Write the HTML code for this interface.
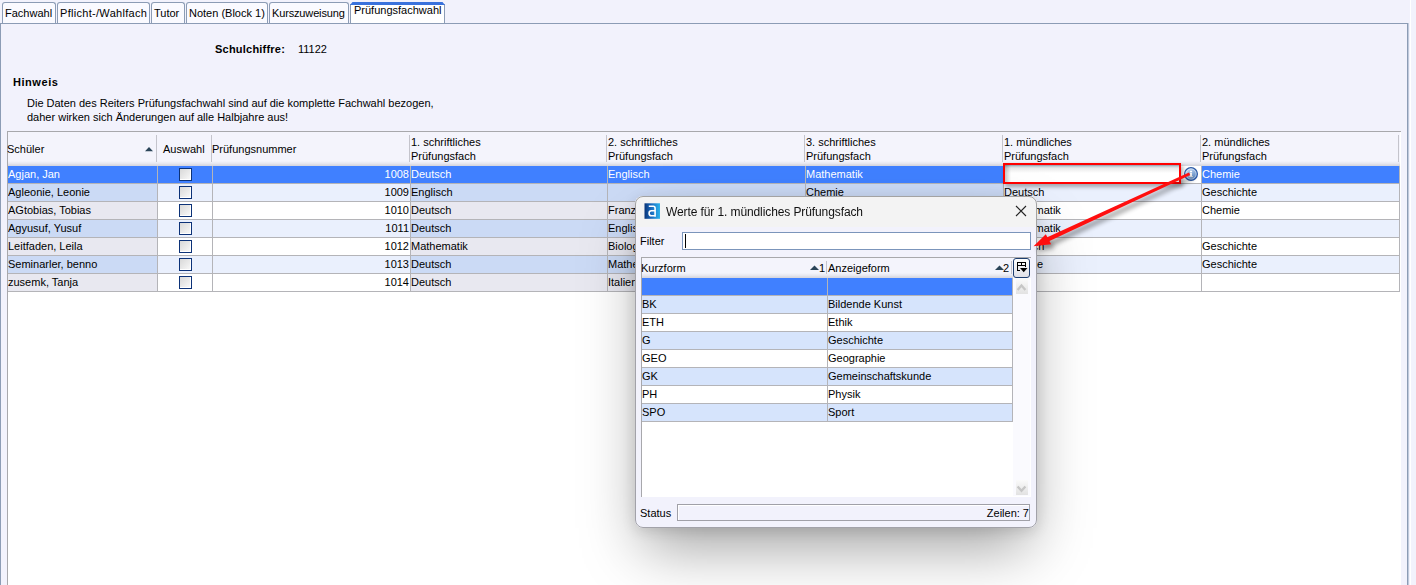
<!DOCTYPE html><html><head><meta charset="utf-8"><style>
*{box-sizing:border-box}
html,body{margin:0;padding:0}
body{width:1416px;height:585px;overflow:hidden;position:relative;background:#f2f2fc;font-family:"Liberation Sans",sans-serif;font-size:11px;color:#000}
.a{position:absolute}
.t{position:absolute;white-space:nowrap;line-height:14px}
.tab{position:absolute;top:2px;height:22px;border:1px solid #8c9cb5;border-bottom:none;border-radius:3px 3px 0 0;background:#fafaff}
.tab span{position:absolute;left:2px;top:3px;line-height:14px;white-space:nowrap}
.cell{position:absolute;height:17px;overflow:hidden;white-space:nowrap;line-height:14px}
.cell span{position:absolute;top:1px;left:0}
.hl{position:absolute;height:1px;background:#b4b4b8}
.vl{position:absolute;width:1px;background:#b4b4b8}
.cb{position:absolute;width:13px;height:13px;border:1px solid #0c3278;box-shadow:inset -1px -1px 0 #fff;background:linear-gradient(135deg,#d8d8d8,#fafafa)}
</style></head><body>

<div class="tab" style="left:2px;width:54px"><span>Fachwahl</span></div>
<div class="tab" style="left:57px;width:93px"><span style=letter-spacing:0.3px>Pflicht-/Wahlfach</span></div>
<div class="tab" style="left:151px;width:34px"><span>Tutor</span></div>
<div class="tab" style="left:186px;width:82px"><span>Noten (Block 1)</span></div>
<div class="tab" style="left:269px;width:80px"><span style=letter-spacing:-0.15px>Kurszuweisung</span></div>
<div class="tab" style="left:350px;width:95px;top:4px;height:20px;background:#ffffff;border-top:none;border-radius:0"><span style="top:-1px;left:3px">Prüfungsfachwahl</span></div>
<div class="a" style="left:350px;top:2px;width:95px;height:3px;background:#3a72dc;clip-path:polygon(2.5px 0,92.5px 0,95px 3px,0 3px)"></div>
<div class="a" style="left:0;top:23px;width:1408px;height:600px;border:1px solid #8c9cb5;border-bottom:none;background:#f2f2fc;box-shadow:1px 0 0 #c0cadc"></div>
<div class="a" style="left:1410px;top:0;width:1px;height:585px;background:#ffffff"></div>
<div class="t" style="left:215px;top:42px;font-weight:bold;letter-spacing:0.22px">Schulchiffre:</div>
<div class="t" style="left:298px;top:42px">11122</div>
<div class="t" style="left:13px;top:75px;font-weight:bold;letter-spacing:0.55px">Hinweis</div>
<div class="t" style="left:27px;top:96px">Die Daten des Reiters Prüfungsfachwahl sind auf die komplette Fachwahl bezogen,<br>daher wirken sich Änderungen auf alle Halbjahre aus!</div>
<div class="a" style="left:7px;top:131px;width:1394px;height:460px;background:#ffffff;border-top:1px solid #a8a8ac;border-left:1px solid #a8a8ac"></div>
<div class="a" style="left:8px;top:132px;width:1392px;height:34px;background:linear-gradient(#f4f4fc 0px,#f4f4fc 29px,#e4e4ec 32px,#d8d8e0 33px)"></div>
<div class="t" style="left:7px;top:142px">Schüler</div>
<div class="vl" style="left:156px;top:135px;height:27px;background:#c4c4cc"></div>
<div class="t" style="left:163px;top:142px">Auswahl</div>
<div class="vl" style="left:211px;top:135px;height:27px;background:#c4c4cc"></div>
<div class="t" style="left:212px;top:142px">Prüfungsnummer</div>
<div class="vl" style="left:409px;top:135px;height:27px;background:#c4c4cc"></div>
<div class="t" style="left:411px;top:135px">1. schriftliches<br>Prüfungsfach</div>
<div class="vl" style="left:606px;top:135px;height:27px;background:#c4c4cc"></div>
<div class="t" style="left:608px;top:135px">2. schriftliches<br>Prüfungsfach</div>
<div class="vl" style="left:804px;top:135px;height:27px;background:#c4c4cc"></div>
<div class="t" style="left:806px;top:135px">3. schriftliches<br>Prüfungsfach</div>
<div class="vl" style="left:1002px;top:135px;height:27px;background:#c4c4cc"></div>
<div class="t" style="left:1004px;top:135px">1. mündliches<br>Prüfungsfach</div>
<div class="vl" style="left:1200px;top:135px;height:27px;background:#c4c4cc"></div>
<div class="t" style="left:1202px;top:135px">2. mündliches<br>Prüfungsfach</div>
<div class="vl" style="left:1398px;top:135px;height:27px;background:#c4c4cc"></div>
<svg class="a" style="left:145px;top:146px" width="10" height="6"><path d="M0 5.2 L4 1 L8 5.2 Z" fill="#2a4458"/></svg>
<div class="cell" style="left:8px;top:166px;width:149px;background:#4080ff;color:#ffffff"><span>Agjan, Jan</span></div>
<div class="vl" style="left:157px;top:166px;height:18px"></div>
<div class="cell" style="left:158px;top:166px;width:54px;background:#4080ff;color:#ffffff"></div>
<div class="vl" style="left:212px;top:166px;height:18px"></div>
<div class="cell" style="left:213px;top:166px;width:197px;background:#4080ff;color:#ffffff"><span style="left:auto;right:1px">1008</span></div>
<div class="vl" style="left:410px;top:166px;height:18px"></div>
<div class="cell" style="left:411px;top:166px;width:196px;background:#4080ff;color:#ffffff"><span>Deutsch</span></div>
<div class="vl" style="left:607px;top:166px;height:18px"></div>
<div class="cell" style="left:608px;top:166px;width:197px;background:#4080ff;color:#ffffff"><span>Englisch</span></div>
<div class="vl" style="left:805px;top:166px;height:18px"></div>
<div class="cell" style="left:806px;top:166px;width:197px;background:#4080ff;color:#ffffff"><span>Mathematik</span></div>
<div class="vl" style="left:1003px;top:166px;height:18px"></div>
<div class="cell" style="left:1004px;top:166px;width:197px;background:#4080ff;color:#ffffff"></div>
<div class="vl" style="left:1201px;top:166px;height:18px"></div>
<div class="cell" style="left:1202px;top:166px;width:197px;background:#4080ff;color:#ffffff"><span>Chemie</span></div>
<div class="vl" style="left:1399px;top:166px;height:18px"></div>
<div class="hl" style="left:8px;top:183px;width:1392px"></div>
<div class="cb" style="left:179px;top:168px"></div>
<div class="cell" style="left:8px;top:184px;width:149px;background:#cbdaf5;color:#000"><span>Agleonie, Leonie</span></div>
<div class="vl" style="left:157px;top:184px;height:18px"></div>
<div class="cell" style="left:158px;top:184px;width:54px;background:#eaf0fd;color:#000"></div>
<div class="vl" style="left:212px;top:184px;height:18px"></div>
<div class="cell" style="left:213px;top:184px;width:197px;background:#eaf0fd;color:#000"><span style="left:auto;right:1px">1009</span></div>
<div class="vl" style="left:410px;top:184px;height:18px"></div>
<div class="cell" style="left:411px;top:184px;width:196px;background:#cbdaf5;color:#000"><span>Englisch</span></div>
<div class="vl" style="left:607px;top:184px;height:18px"></div>
<div class="cell" style="left:608px;top:184px;width:197px;background:#cbdaf5;color:#000"></div>
<div class="vl" style="left:805px;top:184px;height:18px"></div>
<div class="cell" style="left:806px;top:184px;width:197px;background:#cbdaf5;color:#000"><span>Chemie</span></div>
<div class="vl" style="left:1003px;top:184px;height:18px"></div>
<div class="cell" style="left:1004px;top:184px;width:197px;background:#eaf0fd;color:#000"><span>Deutsch</span></div>
<div class="vl" style="left:1201px;top:184px;height:18px"></div>
<div class="cell" style="left:1202px;top:184px;width:197px;background:#eaf0fd;color:#000"><span>Geschichte</span></div>
<div class="vl" style="left:1399px;top:184px;height:18px"></div>
<div class="hl" style="left:8px;top:201px;width:1392px"></div>
<div class="cb" style="left:179px;top:186px"></div>
<div class="cell" style="left:8px;top:202px;width:149px;background:#e8e8f0;color:#000"><span>AGtobias, Tobias</span></div>
<div class="vl" style="left:157px;top:202px;height:18px"></div>
<div class="cell" style="left:158px;top:202px;width:54px;background:#ffffff;color:#000"></div>
<div class="vl" style="left:212px;top:202px;height:18px"></div>
<div class="cell" style="left:213px;top:202px;width:197px;background:#ffffff;color:#000"><span style="left:auto;right:1px">1010</span></div>
<div class="vl" style="left:410px;top:202px;height:18px"></div>
<div class="cell" style="left:411px;top:202px;width:196px;background:#e8e8f0;color:#000"><span>Deutsch</span></div>
<div class="vl" style="left:607px;top:202px;height:18px"></div>
<div class="cell" style="left:608px;top:202px;width:197px;background:#e8e8f0;color:#000"><span>Französisch</span></div>
<div class="vl" style="left:805px;top:202px;height:18px"></div>
<div class="cell" style="left:806px;top:202px;width:197px;background:#e8e8f0;color:#000"><span>Biologie</span></div>
<div class="vl" style="left:1003px;top:202px;height:18px"></div>
<div class="cell" style="left:1004px;top:202px;width:197px;background:#ffffff;color:#000"><span>Mathematik</span></div>
<div class="vl" style="left:1201px;top:202px;height:18px"></div>
<div class="cell" style="left:1202px;top:202px;width:197px;background:#ffffff;color:#000"><span>Chemie</span></div>
<div class="vl" style="left:1399px;top:202px;height:18px"></div>
<div class="hl" style="left:8px;top:219px;width:1392px"></div>
<div class="cb" style="left:179px;top:204px"></div>
<div class="cell" style="left:8px;top:220px;width:149px;background:#cbdaf5;color:#000"><span>Agyusuf, Yusuf</span></div>
<div class="vl" style="left:157px;top:220px;height:18px"></div>
<div class="cell" style="left:158px;top:220px;width:54px;background:#eaf0fd;color:#000"></div>
<div class="vl" style="left:212px;top:220px;height:18px"></div>
<div class="cell" style="left:213px;top:220px;width:197px;background:#eaf0fd;color:#000"><span style="left:auto;right:1px">1011</span></div>
<div class="vl" style="left:410px;top:220px;height:18px"></div>
<div class="cell" style="left:411px;top:220px;width:196px;background:#cbdaf5;color:#000"><span>Deutsch</span></div>
<div class="vl" style="left:607px;top:220px;height:18px"></div>
<div class="cell" style="left:608px;top:220px;width:197px;background:#cbdaf5;color:#000"><span>Englisch</span></div>
<div class="vl" style="left:805px;top:220px;height:18px"></div>
<div class="cell" style="left:806px;top:220px;width:197px;background:#cbdaf5;color:#000"><span>Physik</span></div>
<div class="vl" style="left:1003px;top:220px;height:18px"></div>
<div class="cell" style="left:1004px;top:220px;width:197px;background:#eaf0fd;color:#000"><span>Mathematik</span></div>
<div class="vl" style="left:1201px;top:220px;height:18px"></div>
<div class="cell" style="left:1202px;top:220px;width:197px;background:#eaf0fd;color:#000"></div>
<div class="vl" style="left:1399px;top:220px;height:18px"></div>
<div class="hl" style="left:8px;top:237px;width:1392px"></div>
<div class="cb" style="left:179px;top:222px"></div>
<div class="cell" style="left:8px;top:238px;width:149px;background:#e8e8f0;color:#000"><span>Leitfaden, Leila</span></div>
<div class="vl" style="left:157px;top:238px;height:18px"></div>
<div class="cell" style="left:158px;top:238px;width:54px;background:#ffffff;color:#000"></div>
<div class="vl" style="left:212px;top:238px;height:18px"></div>
<div class="cell" style="left:213px;top:238px;width:197px;background:#ffffff;color:#000"><span style="left:auto;right:1px">1012</span></div>
<div class="vl" style="left:410px;top:238px;height:18px"></div>
<div class="cell" style="left:411px;top:238px;width:196px;background:#e8e8f0;color:#000"><span>Mathematik</span></div>
<div class="vl" style="left:607px;top:238px;height:18px"></div>
<div class="cell" style="left:608px;top:238px;width:197px;background:#e8e8f0;color:#000"><span>Biologie</span></div>
<div class="vl" style="left:805px;top:238px;height:18px"></div>
<div class="cell" style="left:806px;top:238px;width:197px;background:#e8e8f0;color:#000"><span>Chemie</span></div>
<div class="vl" style="left:1003px;top:238px;height:18px"></div>
<div class="cell" style="left:1004px;top:238px;width:197px;background:#ffffff;color:#000"><span>Deutsch</span></div>
<div class="vl" style="left:1201px;top:238px;height:18px"></div>
<div class="cell" style="left:1202px;top:238px;width:197px;background:#ffffff;color:#000"><span>Geschichte</span></div>
<div class="vl" style="left:1399px;top:238px;height:18px"></div>
<div class="hl" style="left:8px;top:255px;width:1392px"></div>
<div class="cb" style="left:179px;top:240px"></div>
<div class="cell" style="left:8px;top:256px;width:149px;background:#cbdaf5;color:#000"><span>Seminarler, benno</span></div>
<div class="vl" style="left:157px;top:256px;height:18px"></div>
<div class="cell" style="left:158px;top:256px;width:54px;background:#eaf0fd;color:#000"></div>
<div class="vl" style="left:212px;top:256px;height:18px"></div>
<div class="cell" style="left:213px;top:256px;width:197px;background:#eaf0fd;color:#000"><span style="left:auto;right:1px">1013</span></div>
<div class="vl" style="left:410px;top:256px;height:18px"></div>
<div class="cell" style="left:411px;top:256px;width:196px;background:#cbdaf5;color:#000"><span>Deutsch</span></div>
<div class="vl" style="left:607px;top:256px;height:18px"></div>
<div class="cell" style="left:608px;top:256px;width:197px;background:#cbdaf5;color:#000"><span>Mathematik</span></div>
<div class="vl" style="left:805px;top:256px;height:18px"></div>
<div class="cell" style="left:806px;top:256px;width:197px;background:#cbdaf5;color:#000"><span>Physik</span></div>
<div class="vl" style="left:1003px;top:256px;height:18px"></div>
<div class="cell" style="left:1004px;top:256px;width:197px;background:#eaf0fd;color:#000"><span>Biologie</span></div>
<div class="vl" style="left:1201px;top:256px;height:18px"></div>
<div class="cell" style="left:1202px;top:256px;width:197px;background:#eaf0fd;color:#000"><span>Geschichte</span></div>
<div class="vl" style="left:1399px;top:256px;height:18px"></div>
<div class="hl" style="left:8px;top:273px;width:1392px"></div>
<div class="cb" style="left:179px;top:258px"></div>
<div class="cell" style="left:8px;top:274px;width:149px;background:#e8e8f0;color:#000"><span>zusemk, Tanja</span></div>
<div class="vl" style="left:157px;top:274px;height:18px"></div>
<div class="cell" style="left:158px;top:274px;width:54px;background:#ffffff;color:#000"></div>
<div class="vl" style="left:212px;top:274px;height:18px"></div>
<div class="cell" style="left:213px;top:274px;width:197px;background:#ffffff;color:#000"><span style="left:auto;right:1px">1014</span></div>
<div class="vl" style="left:410px;top:274px;height:18px"></div>
<div class="cell" style="left:411px;top:274px;width:196px;background:#e8e8f0;color:#000"><span>Deutsch</span></div>
<div class="vl" style="left:607px;top:274px;height:18px"></div>
<div class="cell" style="left:608px;top:274px;width:197px;background:#e8e8f0;color:#000"><span>Italienisch</span></div>
<div class="vl" style="left:805px;top:274px;height:18px"></div>
<div class="cell" style="left:806px;top:274px;width:197px;background:#e8e8f0;color:#000"><span>Englisch</span></div>
<div class="vl" style="left:1003px;top:274px;height:18px"></div>
<div class="cell" style="left:1004px;top:274px;width:197px;background:#ffffff;color:#000"></div>
<div class="vl" style="left:1201px;top:274px;height:18px"></div>
<div class="cell" style="left:1202px;top:274px;width:197px;background:#ffffff;color:#000"></div>
<div class="vl" style="left:1399px;top:274px;height:18px"></div>
<div class="hl" style="left:8px;top:291px;width:1392px"></div>
<div class="cb" style="left:179px;top:276px"></div>
<div class="a" style="left:1004px;top:166px;width:197px;height:17px;background:#ffffff"></div>
<div class="a" style="left:1005px;top:165px;width:174px;height:17px;background:linear-gradient(#8898a8 0px,#b8c4cc 1px,#e8e8e8 3px,#ffffff 8px)"></div>
<div class="a" style="left:1005px;top:165px;width:6px;height:17px;background:linear-gradient(90deg,rgba(0,0,0,0.22),rgba(0,0,0,0))"></div>
<svg class="a" style="left:1183px;top:166px" width="17" height="17" viewBox="0 0 17 17">
<defs><linearGradient id="ig" x1="0.2" y1="0" x2="0.8" y2="1"><stop offset="0" stop-color="#cfe0f4"/><stop offset="0.55" stop-color="#86aad8"/><stop offset="1" stop-color="#4c7cbc"/></linearGradient></defs>
<circle cx="8" cy="8" r="6.4" fill="url(#ig)" stroke="#2c5aa8" stroke-width="1.2"/>
<circle cx="8" cy="8" r="5.1" fill="none" stroke="rgba(255,255,255,0.5)" stroke-width="0.9"/>
<rect x="7" y="4.8" width="2.1" height="1.5" fill="#fff"/><rect x="7" y="6.9" width="2" height="4" fill="#f4f4f4"/><rect x="6.2" y="10.1" width="3.6" height="1" fill="#e4e4e4"/></svg>
<div class="a" style="left:1003px;top:163px;width:178px;height:21px;border:2px solid #ff0000;box-shadow:2px 3px 4px rgba(0,0,0,0.30),inset 1px 1px 3px rgba(0,0,0,0.0)"></div>
<div class="a" style="left:635px;top:196px;width:402px;height:332px;border-radius:8px;box-shadow:0 28px 56px -8px rgba(0,0,0,0.36),0 3px 14px rgba(0,0,0,0.12)"></div>
<div class="a" style="left:635px;top:196px;width:402px;height:332px;border-radius:8px;background:#f2f2fc;overflow:hidden"><div class="a" style="left:0;top:0;width:402px;height:31px;background:#f3f3f3"></div></div>
<svg class="a" style="left:644px;top:203px" width="16" height="16" viewBox="0 0 16 16">
<defs><linearGradient id="ag" x1="0" y1="0" x2="1" y2="0"><stop offset="0" stop-color="#0a3478"/><stop offset="0.45" stop-color="#1a6cc0"/><stop offset="1" stop-color="#2cb4ec"/></linearGradient></defs>
<rect x="0.5" y="0.3" width="15.5" height="15.5" fill="url(#ag)"/>
<path d="M4.8 3.3 H9.2 Q11.1 3.3 11.1 5.3 V13.7 M11.1 7.7 H7.4 Q5.1 7.7 5.1 10.2 Q5.1 12.8 7.4 12.8 H11.1" fill="none" stroke="#fff" stroke-width="1.6"/></svg>
<div class="t" style="left:666px;top:205px;font-size:12px;color:#111;letter-spacing:-0.1px;will-change:transform">Werte für 1. mündliches Prüfungsfach</div>
<svg class="a" style="left:1015px;top:205px" width="12" height="12" viewBox="0 0 12 12"><path d="M1 1 L11 11 M11 1 L1 11" stroke="#222" stroke-width="1.1"/></svg>
<div class="t" style="left:640px;top:234px">Filter</div>
<div class="a" style="left:682px;top:232px;width:349px;height:18px;border:1px solid #7b95bb;background:#fff"></div>
<div class="a" style="left:685px;top:234px;width:1px;height:14px;background:#000"></div>
<div class="a" style="left:641px;top:257px;width:390px;height:240px;background:#fff;border-top:1px solid #a8a8ac;border-left:1px solid #a8a8ac"></div>
<div class="a" style="left:642px;top:258px;width:371px;height:20px;background:linear-gradient(#f4f4fc 0px,#f4f4fc 15px,#e4e4ec 18px,#d8d8e0 19px)"></div>
<div class="a" style="left:1013px;top:258px;width:18px;height:20px;background:#f4f4fc"></div>
<div class="t" style="left:641px;top:261px">Kurzform</div>
<div class="t" style="left:828px;top:261px">Anzeigeform</div>
<div class="vl" style="left:826px;top:261px;height:13px;background:#c4c4cc"></div>
<div class="vl" style="left:1011px;top:261px;height:13px;background:#c4c4cc"></div>
<svg class="a" style="left:810px;top:265px" width="10" height="6"><path d="M0 5 L4.5 0.5 L9 5 Z" fill="#2a4458"/></svg>
<div class="t" style="left:819px;top:261px">1</div>
<svg class="a" style="left:995px;top:265px" width="10" height="6"><path d="M0 5 L4.5 0.5 L9 5 Z" fill="#2a4458"/></svg>
<div class="t" style="left:1003px;top:261px">2</div>
<div class="a" style="left:1013px;top:258px;width:17px;height:20px;border:1px solid #1e3e70;border-radius:3px;background:linear-gradient(#ffffff,#e0e0e8)"></div>
<svg class="a" style="left:1011px;top:256px" width="20" height="20" shape-rendering="crispEdges"><rect x="6" y="6" width="9" height="1" fill="#000"/><rect x="6" y="9" width="9" height="1" fill="#000"/><rect x="6" y="6" width="1" height="9" fill="#000"/><rect x="6" y="14" width="3" height="1" fill="#000"/><rect x="10" y="6" width="1" height="4" fill="#000"/><rect x="14" y="6" width="1" height="5" fill="#000"/><path d="M9 12 H16.5 L12.7 16.2 Z" fill="#000" shape-rendering="auto"/></svg>
<div class="cell" style="left:642px;top:278px;width:185px;background:#4080ff"><span style="left:0"></span></div>
<div class="vl" style="left:827px;top:278px;height:18px"></div>
<div class="cell" style="left:828px;top:278px;width:184px;background:#4080ff"><span style="left:0"></span></div>
<div class="vl" style="left:1012px;top:278px;height:18px"></div>
<div class="hl" style="left:642px;top:295px;width:371px"></div>
<div class="cell" style="left:642px;top:296px;width:185px;background:#d6e4fc"><span style="left:0">BK</span></div>
<div class="vl" style="left:827px;top:296px;height:18px"></div>
<div class="cell" style="left:828px;top:296px;width:184px;background:#d6e4fc"><span style="left:0">Bildende Kunst</span></div>
<div class="vl" style="left:1012px;top:296px;height:18px"></div>
<div class="hl" style="left:642px;top:313px;width:371px"></div>
<div class="cell" style="left:642px;top:314px;width:185px;background:#ffffff"><span style="left:0">ETH</span></div>
<div class="vl" style="left:827px;top:314px;height:18px"></div>
<div class="cell" style="left:828px;top:314px;width:184px;background:#ffffff"><span style="left:0">Ethik</span></div>
<div class="vl" style="left:1012px;top:314px;height:18px"></div>
<div class="hl" style="left:642px;top:331px;width:371px"></div>
<div class="cell" style="left:642px;top:332px;width:185px;background:#d6e4fc"><span style="left:0">G</span></div>
<div class="vl" style="left:827px;top:332px;height:18px"></div>
<div class="cell" style="left:828px;top:332px;width:184px;background:#d6e4fc"><span style="left:0">Geschichte</span></div>
<div class="vl" style="left:1012px;top:332px;height:18px"></div>
<div class="hl" style="left:642px;top:349px;width:371px"></div>
<div class="cell" style="left:642px;top:350px;width:185px;background:#ffffff"><span style="left:0">GEO</span></div>
<div class="vl" style="left:827px;top:350px;height:18px"></div>
<div class="cell" style="left:828px;top:350px;width:184px;background:#ffffff"><span style="left:0">Geographie</span></div>
<div class="vl" style="left:1012px;top:350px;height:18px"></div>
<div class="hl" style="left:642px;top:367px;width:371px"></div>
<div class="cell" style="left:642px;top:368px;width:185px;background:#d6e4fc"><span style="left:0">GK</span></div>
<div class="vl" style="left:827px;top:368px;height:18px"></div>
<div class="cell" style="left:828px;top:368px;width:184px;background:#d6e4fc"><span style="left:0">Gemeinschaftskunde</span></div>
<div class="vl" style="left:1012px;top:368px;height:18px"></div>
<div class="hl" style="left:642px;top:385px;width:371px"></div>
<div class="cell" style="left:642px;top:386px;width:185px;background:#ffffff"><span style="left:0">PH</span></div>
<div class="vl" style="left:827px;top:386px;height:18px"></div>
<div class="cell" style="left:828px;top:386px;width:184px;background:#ffffff"><span style="left:0">Physik</span></div>
<div class="vl" style="left:1012px;top:386px;height:18px"></div>
<div class="hl" style="left:642px;top:403px;width:371px"></div>
<div class="cell" style="left:642px;top:404px;width:185px;background:#d6e4fc"><span style="left:0">SPO</span></div>
<div class="vl" style="left:827px;top:404px;height:18px"></div>
<div class="cell" style="left:828px;top:404px;width:184px;background:#d6e4fc"><span style="left:0">Sport</span></div>
<div class="vl" style="left:1012px;top:404px;height:18px"></div>
<div class="hl" style="left:642px;top:421px;width:371px"></div>
<div class="a" style="left:1013px;top:278px;width:17px;height:218px;background:#fafafe"></div>
<div class="a" style="left:1016px;top:279px;width:12px;height:15px;background:linear-gradient(#fafafa,#e2e2e2)"></div>
<svg class="a" style="left:1016px;top:279px" width="12" height="15"><path d="M1.6 11 L5.5 6.6 L9.4 11" fill="none" stroke="#c6c6c6" stroke-width="2.3"/></svg>
<div class="a" style="left:1016px;top:480px;width:12px;height:15px;background:linear-gradient(#fafafa,#e2e2e2)"></div>
<svg class="a" style="left:1016px;top:480px" width="12" height="15"><path d="M1.6 6.4 L5.5 10.8 L9.4 6.4" fill="none" stroke="#c6c6c6" stroke-width="2.3"/></svg>
<div class="t" style="left:640px;top:506px">Status</div>
<div class="a" style="left:677px;top:504px;width:353px;height:17px;border:1px solid #a0a0a8;background:#f2f2fc;box-shadow:inset 1px 1px 0 #fff"></div>
<div class="t" style="left:auto;right:387px;top:506px">Zeilen: 7</div>
<div class="a" style="left:635px;top:196px;width:402px;height:332px;border:1px solid rgba(0,0,0,0.33);border-radius:8px"></div>
<svg class="a" style="left:0;top:0" width="1416" height="585">
<defs><filter id="sh" x="-20%" y="-20%" width="140%" height="140%"><feGaussianBlur stdDeviation="2.5"/></filter></defs>
<g opacity="0.45" filter="url(#sh)" transform="translate(3,4)"><polygon points="1189.0,172.6 1045.6,238.1 1047.4,241.9 1190.2,175.0" fill="#000"/><path d="M1033.5 246.2 L1045.8 234.2 L1051.2 244.2 Z" fill="#000"/></g>
<polygon points="1189.0,172.6 1045.6,238.1 1047.4,241.9 1190.2,175.0" fill="#ff0f0f"/>
<path d="M1033.5 246.2 L1045.8 234.2 L1051.2 244.2 Z" fill="#ff0f0f"/>
</svg>
</body></html>
